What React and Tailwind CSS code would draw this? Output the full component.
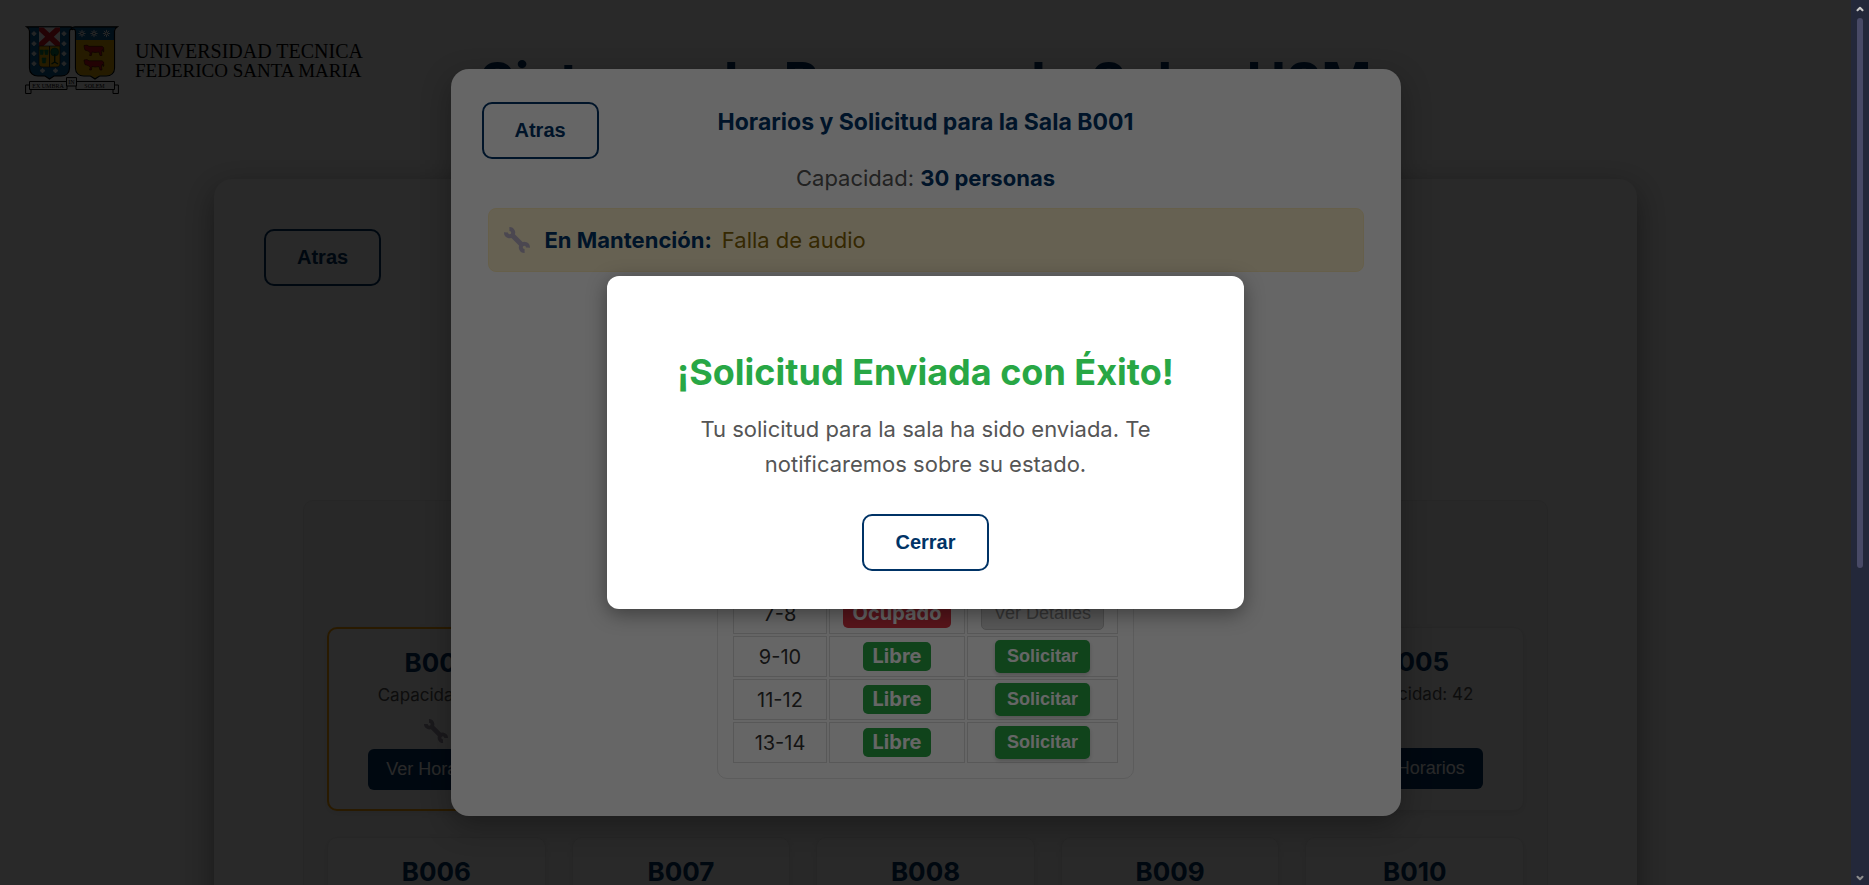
import { ChevronDown, ChevronUp } from "lucide-react";

const rooms = [
  { name: "B001", capacity: 30, maintenance: true },
  { name: "B002", capacity: 30 },
  { name: "B003", capacity: 30 },
  { name: "B004", capacity: 42 },
  { name: "B005", capacity: 42 },
  { name: "B006", capacity: 42 },
  { name: "B007", capacity: 42 },
  { name: "B008", capacity: 42 },
  { name: "B009", capacity: 42 },
  { name: "B010", capacity: 42 },
];

const blocks = [
  { label: "7-8", free: false },
  { label: "9-10", free: true },
  { label: "11-12", free: true },
  { label: "13-14", free: true },
];

function Wrench({ className }) {
  return (
    <svg viewBox="0 0 26 26" className={className} fill="none" stroke="currentColor" aria-hidden="true">
      <path d="M8 8 L18 18" strokeWidth="5.200" />
      <path d="M5.400 2 A3.700 3.700 0 0 1 8.200 8.200 A3.700 3.700 0 0 1 2 5.400" strokeWidth="4" />
      <path d="M20.600 24 A3.700 3.700 0 0 1 17.800 17.800 A3.700 3.700 0 0 1 24 20.600" strokeWidth="4" />
    </svg>
  );
}

function Rosette({ x, y }) {
  return (
    <g transform={`translate(${x} ${y})`} stroke="#e8eef2" strokeWidth="1">
      <path d="M-3.600 0H3.600M0 -3.600V3.600M-2.600 -2.600L2.600 2.600M-2.600 2.600L2.600 -2.600" />
      <circle r="1.400" fill="#2a4a60" stroke="#fff" />
    </g>
  );
}

function Bull({ y }) {
  return (
    <path
      transform={`translate(59 ${y})`}
      d="M0 1 L3 .6 L5 1.800 H18 L19.600 3 L19.800 7 L19 7.600 L18.600 5 L17.400 7 L18 11 H16 L15 7.600 L11 8 L8 7.400 L7.400 11 H5.600 L6.200 8.400 L4.400 6.600 L1 5.600 L.4 3.400 Z"
      fill="#d8121f"
      stroke="#300"
      strokeWidth=".6"
    />
  );
}

const shells = [
  [9, 7.5], [9, 17.5], [9, 27.5], [9, 37.5],
  [39, 7.5], [39, 17.5], [39, 27.5], [39, 37.5],
  [17.5, 44.5], [30.5, 44.5],
];

function Crest() {
  return (
    <svg viewBox="0 0 94 69" className="h-[69px] w-[94px] shrink-0" aria-hidden="true">
      <path d="M1.500 .8 H45 C47.500 1 48 2 47.500 3.500 C45.500 2.500 44.500 3.500 44.500 6 V42 C44.500 47 41 50 36 50 H29 L24.500 53 L20 50 H13 C8 50 4.500 47 4.500 42 V5 C4.500 3 3.500 2 1.500 .8 Z" fill="#0b609c" stroke="#000" strokeWidth="1.200" />
      <path d="M14 1.400 H35 V20 H14 Z" fill="#fff" />
      <path d="M14 1.400 H18.500 L24.500 7 L30.500 1.400 H35 V5 L28.800 10.700 L35 16.500 V20 H30.500 L24.500 14.500 L18.500 20 H14 V16.500 L20.200 10.700 L14 5 Z" fill="#dc1424" />
      <path d="M14 20 H24.500 V41 H18 C15.500 41 14 40 14 37.500 Z M24.500 20 H35 V37.500 C35 40 33.500 41 31 41 H24.500 Z" fill="#e9ab00" stroke="#222" strokeWidth=".7" />
      <path d="M14.800 24 H18.400 L18 28.500 H15.400 Z M19.600 24 H23.200 L22.800 28.500 H20.200 Z M17 32 H21 L20.400 37 H17.600 Z" fill="#08784c" stroke="#083" strokeWidth=".6" />
      <circle cx="29.700" cy="26" r="4" fill="#08784c" stroke="#043" strokeWidth=".6" />
      <path d="M29.700 28 V37 M26.500 38 L29.700 36 L33 38" stroke="#043820" strokeWidth="1.400" fill="none" />
      {shells.map(([x, y]) => (
        <path
          key={`${x}-${y}`}
          transform={`translate(${x} ${y})`}
          d="M0 -2.800 L1 -1.200 L2.600 -.4 L2 1.200 L.8 1.500 L1 2.500 H-1 L-.8 1.500 L-2 1.200 L-2.600 -.4 L-1 -1.200 Z"
          fill="#e2e6ea"
        />
      ))}
      <path d="M92.500 .8 H50 C46.500 1 45.500 3 47.500 3.500 C49.500 2.500 50.500 4 50.500 6 V42 C50.500 47 54 50 59 50 H65.500 L70 53 L74.500 50 H81 C86 50 89.500 47 89.500 42 V5 C89.500 3 90.500 2 92.500 .8 Z" fill="#0b609c" stroke="#000" strokeWidth="1.200" />
      <path d="M51 14 H89 V42 C89 46.500 86 49.400 81 49.400 H74.500 L70 52 L65.500 49.400 H59 C54 49.400 51 46.500 51 42 Z" fill="#e9ab00" />
      <Rosette x={57} y={7.5} />
      <Rosette x={69} y={7.5} />
      <Rosette x={81.5} y={7.5} />
      <Bull y={18.5} />
      <Bull y={33} />
      <g fill="#fff" stroke="#000" strokeWidth="1">
        <path d="M.6 59 H6 V67.500 H.6 Z M93.400 59 H88 V67.500 H93.400 Z" />
        <path d="M4.500 55.500 H42 V63.500 H4.500 Z M51 55.500 H89.500 V63.500 H51 Z" />
        <path d="M41.500 51.600 H51.500 V60 H41.500 Z" />
      </g>
      <g fontFamily="Liberation Serif, serif" fontSize="6" fill="#000" textAnchor="middle">
        <text x="23" y="61.500">EX UMBRA</text>
        <text x="46.500" y="58">IN</text>
        <text x="69.500" y="61.500">SOLEM</text>
      </g>
    </svg>
  );
}

function OutlineButton({ children }) {
  return (
    <button
      type="button"
      className="rounded-[10px] border-2 border-[#003366] bg-white px-[31px] py-[15px] font-['Liberation_Sans',sans-serif] text-[20px] leading-[23px] font-bold text-[#003366]"
    >
      {children}
    </button>
  );
}

function RoomCard({ room }) {
  return (
    <article
      className={
        room.maintenance
          ? "flex h-[184px] flex-col items-center rounded-[10px] border-2 border-[#ffa500] bg-white px-4 pt-4 shadow-[0_2px_6px_rgba(0,0,0,0.08)]"
          : "flex h-[184px] flex-col items-center rounded-[10px] border border-[#eeeeee] bg-white px-4 pt-4 shadow-[0_2px_6px_rgba(0,0,0,0.08)]"
      }
    >
      <h3 className="text-[26px] leading-9 font-bold text-[#003366]">{room.name}</h3>
      <p className="text-[17px] leading-7 text-[#555555]">Capacidad: {room.capacity}</p>
      <div className="flex h-10 items-end justify-center pb-[6px]">
        {room.maintenance && <Wrench className="size-6 text-[#a39bad]" />}
      </div>
      <button
        type="button"
        className="rounded-md bg-[#003366] px-[18px] py-[10px] font-['Liberation_Sans',sans-serif] text-[18px] leading-[21px] whitespace-nowrap text-white"
      >
        Ver Horarios
      </button>
    </article>
  );
}

function RoomsPage() {
  return (
    <>
      <header className="grid grid-cols-[1fr_auto_1fr] px-[25px] pt-[26px]">
        <a href="#inicio" className="flex items-start gap-4 text-black">
          <Crest />
          <span className="flex flex-col pt-4 font-['Liberation_Serif',serif] leading-[19px] whitespace-nowrap">
            <span className="text-[20px]">UNIVERSIDAD TECNICA</span>
            <span className="text-[19px]">FEDERICO SANTA MARIA</span>
          </span>
        </a>
        <h1 className="pt-[22px] text-[54px] leading-[68px] font-bold text-[#003366]">
          Sistema de Reserva de Salas USM
        </h1>
      </header>
      <main className="mx-auto mt-[63px] w-full max-w-[1423px] rounded-[18px] bg-white p-[50px] shadow-[0_10px_30px_rgba(0,0,0,0.4)]">
        <OutlineButton>Atras</OutlineButton>
        <section className="mx-[39px] mt-[214px] rounded-[10px] border border-[#f0f0f0] bg-[#fcfcfc] px-[23px] pt-[126px] pb-6">
          <div className="grid grid-cols-5 gap-[26px]">
            {rooms.map((room) => (
              <RoomCard key={room.name} room={room} />
            ))}
          </div>
        </section>
      </main>
    </>
  );
}

function ScheduleTable() {
  return (
    <div className="rounded-[10px] border border-[#e6e6e6] p-[13px]">
      <table className="border-separate border-spacing-[2px] text-center text-[20px] leading-6 text-[#333333]">
        <tbody>
          {blocks.map((block) => (
            <tr key={block.label}>
              <td className="h-[41px] w-[94px] border border-[#dddddd] p-0">{block.label}</td>
              <td className="h-[41px] w-[136px] border border-[#dddddd] p-0">
                <span
                  className={
                    block.free
                      ? "inline-block rounded-[5px] bg-[#28a745] px-[10px] py-[2px] leading-[25px] font-bold text-white"
                      : "inline-block rounded-[5px] bg-[#dc3545] px-[10px] py-[2px] leading-[25px] font-bold text-white"
                  }
                >
                  {block.free ? "Libre" : "Ocupado"}
                </span>
              </td>
              <td className="h-[41px] w-[151px] border border-[#dddddd] p-0">
                {block.free ? (
                  <button
                    type="button"
                    className="rounded-[5px] bg-[#28a745] px-3 py-[6px] font-['Liberation_Sans',sans-serif] text-[18px] leading-[21px] font-bold text-white shadow-[0_2px_4px_rgba(0,0,0,0.2)]"
                  >
                    Solicitar
                  </button>
                ) : (
                  <button
                    type="button"
                    disabled
                    className="rounded-[5px] border border-[#c4c4c4] bg-[#dddddd] px-3 py-[5px] font-['Liberation_Sans',sans-serif] text-[18px] leading-[21px] text-[#888888]"
                  >
                    Ver Detalles
                  </button>
                )}
              </td>
            </tr>
          ))}
        </tbody>
      </table>
    </div>
  );
}

function ScheduleDialog() {
  return (
    <div className="absolute inset-0 flex items-center justify-center bg-black/60">
      <section
        aria-labelledby="schedule-title"
        className="relative flex w-full max-w-[950px] flex-col rounded-[18px] bg-white px-[37px] py-[37px] shadow-[0_10px_30px_rgba(0,0,0,0.3)]"
      >
        <div className="absolute top-[33px] left-[31px]">
          <OutlineButton>Atras</OutlineButton>
        </div>
        <h2 id="schedule-title" className="text-center text-[23px] leading-8 font-bold text-[#003366]">
          Horarios y Solicitud para la Sala B001
        </h2>
        <p className="mt-6 text-center text-[22px] leading-8 text-[#555555]">
          Capacidad: <strong className="font-bold text-[#003366]">30 personas</strong>
        </p>
        <p className="mt-[14px] flex items-center rounded-lg border border-[#ffeeba] bg-[#fff3cd] px-[15px] py-[15px] text-[22px] leading-8 text-[#856404]">
          <Wrench className="mr-[15px] size-[26px] text-[#bbb2c8]" />
          <strong className="mr-[10px] font-bold text-[#003366]">En Mantención:</strong>
          Falla de audio
        </p>
        <div className="mt-[305px] flex justify-center">
          <ScheduleTable />
        </div>
      </section>
    </div>
  );
}

function SuccessDialog() {
  return (
    <div className="absolute inset-0 flex items-center justify-center bg-black/60">
      <section
        role="dialog"
        aria-modal="true"
        aria-labelledby="success-title"
        className="flex w-full max-w-[637px] flex-col items-center rounded-xl bg-white px-[62px] pt-[74px] pb-[38px] text-center shadow-[0_5px_20px_rgba(0,0,0,0.4)]"
      >
        <h2 id="success-title" className="text-[36px] leading-[44px] font-bold whitespace-nowrap text-[#28a745]">
          ¡Solicitud Enviada con Éxito!
        </h2>
        <p className="mt-[18px] mb-8 text-[22px] leading-[35px] text-[#555555]">
          Tu solicitud para la sala ha sido enviada. Te notificaremos sobre su estado.
        </p>
        <OutlineButton>Cerrar</OutlineButton>
      </section>
    </div>
  );
}

function ScrollRail() {
  return (
    <div aria-hidden="true" className="flex w-[18px] shrink-0 flex-col items-center bg-[#23283a] pt-1 pb-[2px]">
      <ChevronUp className="size-[10px] text-[#c8c8c8]" strokeWidth={5} />
      <div className="mt-1 w-[6px] flex-[550] rounded-full bg-[#484a66]" />
      <div className="flex-[305]" />
      <ChevronDown className="size-[10px] text-[#8c8c8c]" strokeWidth={5} />
    </div>
  );
}

export default function App() {
  return (
    <div className="flex h-screen overflow-hidden bg-white font-[Inter,sans-serif]">
      <div className="relative min-w-0 flex-1 overflow-hidden">
        <RoomsPage />
        <ScheduleDialog />
        <SuccessDialog />
      </div>
      <ScrollRail />
    </div>
  );
}
